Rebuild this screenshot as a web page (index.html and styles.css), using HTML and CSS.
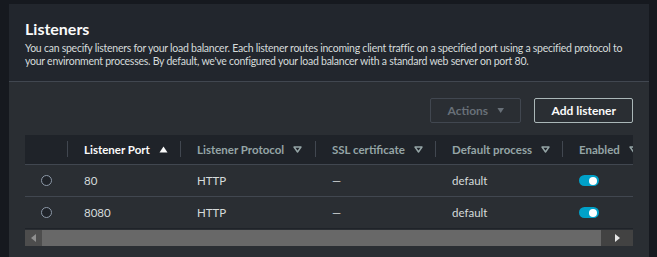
FILE: index.html
```html
<!DOCTYPE html>
<html>

<head>
    <meta name="viewport" content="width=device-width, initial-scale=1">
    <title>Listeners</title>
    <meta charset="UTF-8">
    <link rel="stylesheet" href="styles.css">
</head>

<body>

    <div class="container">
        <div class="container_header">
            <h2 class="title">Listeners</h2>
            <p class="description">You can specify listeners for your load balancer. Each listener routes incoming client traffic on a specified port using a specified protocol to your environment processes. By default, we've configured your load balancer with a standard web server on port 80.</p>
        </div>

        <div class="toolbar">
            <button class="button button_disabled" disabled>Actions
                <svg class="caret" width="9" height="7" viewBox="0 0 9 7"><path d="M0.5 0.5h8l-4 6z" fill="currentColor"/></svg>
            </button>
            <button class="button">Add listener</button>
        </div>

        <div class="table_wrap">
            <div class="grid">
                <div class="th"></div>
                <div class="th sorted"><span class="sep"></span>Listener Port
                    <svg class="sort" width="9" height="7" viewBox="0 0 9 7"><path d="M0.5 6.5h8l-4-6z" fill="currentColor"/></svg>
                </div>
                <div class="th"><span class="sep"></span>Listener Protocol
                    <svg class="sort" width="9" height="7" viewBox="0 0 9 7"><path d="M1 1h7l-3.5 5z" fill="none" stroke="currentColor" stroke-width="1.4" stroke-linejoin="round"/></svg>
                </div>
                <div class="th"><span class="sep"></span>SSL certificate
                    <svg class="sort" width="9" height="7" viewBox="0 0 9 7"><path d="M1 1h7l-3.5 5z" fill="none" stroke="currentColor" stroke-width="1.4" stroke-linejoin="round"/></svg>
                </div>
                <div class="th"><span class="sep"></span>Default process
                    <svg class="sort" width="9" height="7" viewBox="0 0 9 7"><path d="M1 1h7l-3.5 5z" fill="none" stroke="currentColor" stroke-width="1.4" stroke-linejoin="round"/></svg>
                </div>
                <div class="th"><span class="sep"></span>Enabled
                    <svg class="sort" width="9" height="7" viewBox="0 0 9 7"><path d="M1 1h7l-3.5 5z" fill="none" stroke="currentColor" stroke-width="1.4" stroke-linejoin="round"/></svg>
                </div>

                <div class="td"><span class="radio"></span></div>
                <div class="td">80</div>
                <div class="td">HTTP</div>
                <div class="td">&mdash;</div>
                <div class="td">default</div>
                <div class="td"><span class="toggle"></span></div>

                <div class="td"><span class="radio"></span></div>
                <div class="td">8080</div>
                <div class="td">HTTP</div>
                <div class="td">&mdash;</div>
                <div class="td">default</div>
                <div class="td"><span class="toggle"></span></div>
            </div>

            <div class="scrollbar">
                <div class="scroll_btn">
                    <svg width="5" height="8" viewBox="0 0 5 8"><path d="M5 0v8L0 4z" fill="#8f8f8f"/></svg>
                </div>
                <div class="scroll_thumb"></div>
                <div class="scroll_track"></div>
                <div class="scroll_btn right">
                    <svg width="5" height="8" viewBox="0 0 5 8"><path d="M0 0v8l5-4z" fill="#e6e6e6"/></svg>
                </div>
            </div>
        </div>
    </div>

</body>

</html>
```

FILE: styles.css
```css
body {
    margin: 0;
    padding: 4px 8px 0 9px;
    background-color: #16191f;
    font-family: Lato, "Open Sans", sans-serif;
    overflow: hidden;
    height: 253px;
}

/* Panel */
.container {
    width: 640px;
    height: 260px;
    background-color: #2a2e33;
}

.container_header {
    background-color: #22262d;
    padding: 15px 16px 0 16px;
    height: 62px;
    border-bottom: 1px solid #414750;
}

.title {
    margin: 0;
    font-size: 16px;
    font-weight: bold;
    color: #fafafa;
    line-height: 20px;
}

.description {
    margin: 3px 0 0 0;
    font-size: 10.5px;
    letter-spacing: -0.25px;
    line-height: 13px;
    color: #d5dbdb;
}

/* Buttons */
.toolbar {
    display: flex;
    justify-content: flex-end;
    gap: 13px;
    padding: 16px 16px 12px 16px;
}

.button {
    height: 25px;
    padding: 0 16px;
    background-color: transparent;
    border: 1px solid #aab7b8;
    border-radius: 2px;
    color: #fafafa;
    font-family: inherit;
    font-size: 12px;
    font-weight: bold;
}

.button_disabled {
    width: 91px;
    border-color: #414750;
    color: #687078;
    display: flex;
    align-items: center;
    justify-content: center;
    gap: 9px;
}

/* Table */
.table_wrap {
    margin: 0 16px;
    width: 608px;
    overflow: hidden;
    background-color: #2a2e33;
}

.grid {
    display: grid;
    grid-template-columns: 42px 113px 135px 120px 127px 110px;
    width: 647px;
}

.th {
    position: relative;
    height: 29px;
    background-color: #1f2329;
    border-bottom: 1px solid #414750;
    display: flex;
    align-items: center;
    padding-left: 17px;
    gap: 9px;
    font-size: 11.5px;
    font-weight: bold;
    color: #95a5a6;
    white-space: nowrap;
}

.th.sorted {
    color: #fafafa;
}

.sep {
    position: absolute;
    left: 0;
    top: 6px;
    height: 16px;
    border-left: 1px solid #414750;
}

.th:first-child,
.td:nth-child(6n+1) {
    padding-left: 0;
    justify-content: center;
}

.sort {
    flex: none;
}

.td {
    height: 31px;
    border-bottom: 1px solid #414750;
    display: flex;
    align-items: center;
    padding-left: 17px;
    font-size: 11.5px;
    color: #d5dbdb;
}

.td:nth-last-child(-n+6) {
    border-bottom-color: #1f2329;
}

.radio {
    width: 9px;
    height: 9px;
    border: 1px solid #8d99a8;
    border-radius: 50%;
    background-color: #1f2329;
}

.toggle {
    position: relative;
    width: 20px;
    height: 11px;
    border-radius: 6px;
    background-color: #00a1c9;
}

.toggle::after {
    content: "";
    position: absolute;
    right: 2px;
    top: 1.5px;
    width: 8px;
    height: 8px;
    border-radius: 50%;
    background-color: #ffffff;
}

/* Fake horizontal scrollbar */
.scrollbar {
    display: flex;
    height: 16px;
    background-color: #424242;
    margin-top: 1px;
}

.scroll_btn {
    width: 17px;
    display: flex;
    align-items: center;
    justify-content: center;
    background-color: #4d4d4d;
}

.scroll_btn.right {
    background-color: #424242;
    width: 32px;
}

.scroll_thumb {
    width: 559px;
    background-color: #686868;
}

.scroll_track {
    flex: 1;
}
```
